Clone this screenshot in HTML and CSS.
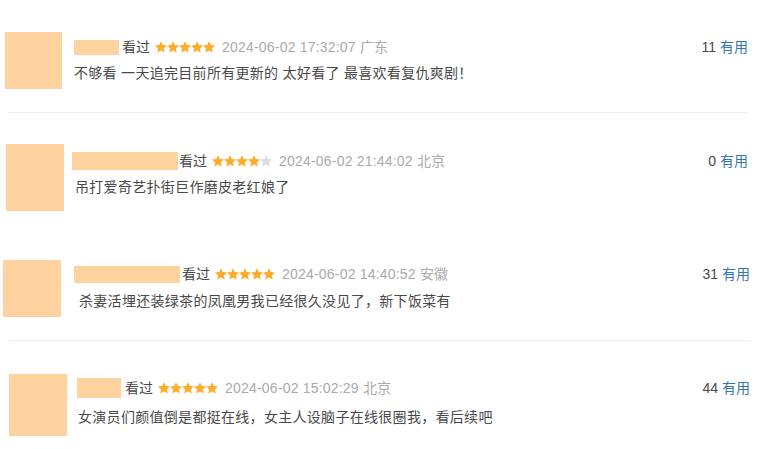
FILE: index.html
```html
<!DOCTYPE html>
<html>
<head>
    <title>短评</title>
    <link rel="stylesheet" href="styles.css">
</head>
<body>
    <svg class="defs" width="0" height="0">
        <symbol id="star" viewBox="1 1.2 22 21">
            <path d="M12 1.2l3.3 7 7.7.9-5.7 5.2 1.6 7.6L12 18l-6.9 3.9 1.6-7.6L1 9.1l7.7-.9z"/>
        </symbol>
    </svg>

    <div class="list">
        <!-- 第一条 -->
        <div class="item item-1">
            <div class="avatar"></div>
            <div class="main">
                <div class="head">
                    <span class="name"></span>
                    <span class="watched">看过</span>
                    <span class="stars">
                        <svg class="star on"><use href="#star"/></svg><svg class="star on"><use href="#star"/></svg><svg class="star on"><use href="#star"/></svg><svg class="star on"><use href="#star"/></svg><svg class="star on"><use href="#star"/></svg>
                    </span>
                    <span class="time">2024-06-02 17:32:07 广东</span>
                    <span class="vote">11 <a href="#">有用</a></span>
                </div>
                <p class="text">不够看 一天追完目前所有更新的 太好看了 最喜欢看复仇爽剧！</p>
            </div>
        </div>
        <div class="divider divider-1"></div>

        <!-- 第二条 -->
        <div class="item item-2">
            <div class="avatar"></div>
            <div class="main">
                <div class="head">
                    <span class="name"></span>
                    <span class="watched">看过</span>
                    <span class="stars">
                        <svg class="star on"><use href="#star"/></svg><svg class="star on"><use href="#star"/></svg><svg class="star on"><use href="#star"/></svg><svg class="star on"><use href="#star"/></svg><svg class="star"><use href="#star"/></svg>
                    </span>
                    <span class="time">2024-06-02 21:44:02 北京</span>
                    <span class="vote">0 <a href="#">有用</a></span>
                </div>
                <p class="text">吊打爱奇艺扑街巨作磨皮老红娘了</p>
            </div>
        </div>

        <!-- 第三条 -->
        <div class="item item-3">
            <div class="avatar"></div>
            <div class="main">
                <div class="head">
                    <span class="name"></span>
                    <span class="watched">看过</span>
                    <span class="stars">
                        <svg class="star on"><use href="#star"/></svg><svg class="star on"><use href="#star"/></svg><svg class="star on"><use href="#star"/></svg><svg class="star on"><use href="#star"/></svg><svg class="star on"><use href="#star"/></svg>
                    </span>
                    <span class="time">2024-06-02 14:40:52 安徽</span>
                    <span class="vote">31 <a href="#">有用</a></span>
                </div>
                <p class="text">杀妻活埋还装绿茶的凤凰男我已经很久没见了，新下饭菜有</p>
            </div>
        </div>
        <div class="divider divider-2"></div>

        <!-- 第四条 -->
        <div class="item item-4">
            <div class="avatar"></div>
            <div class="main">
                <div class="head">
                    <span class="name"></span>
                    <span class="watched">看过</span>
                    <span class="stars">
                        <svg class="star on"><use href="#star"/></svg><svg class="star on"><use href="#star"/></svg><svg class="star on"><use href="#star"/></svg><svg class="star on"><use href="#star"/></svg><svg class="star on"><use href="#star"/></svg>
                    </span>
                    <span class="time">2024-06-02 15:02:29 北京</span>
                    <span class="vote">44 <a href="#">有用</a></span>
                </div>
                <p class="text">女演员们颜值倒是都挺在线，女主人设脑子在线很圈我，看后续吧</p>
            </div>
        </div>
    </div>
</body>
</html>
```

FILE: styles.css
```css
/* 短评列表 */
body {
    margin: 0;
    padding: 0;
    background-color: #FFFFFF;
    font-family: "Liberation Sans", "Noto Sans CJK SC", sans-serif;
    font-size: 14px;
    color: #494949;
}

.defs {
    position: absolute;
}

.list {
    width: 758px;
}

.item {
    display: flex;
    align-items: flex-start;
    box-sizing: border-box;
}

.avatar {
    flex: none;
    width: 58px;
    height: 57px;
    background-color: #FFD39F;
}

.main {
    flex: 1;
    padding-right: 10px;
}

.head {
    display: flex;
    align-items: center;
    height: 20px;
    line-height: 20px;
    white-space: nowrap;
}

.name {
    width: 45px;
    height: 15px;
    background-color: #FFD39F;
    margin-right: 3px;
}

.watched {
    color: #494949;
}

.stars {
    display: flex;
    margin-left: 5px;
    margin-right: 7px;
}

.star {
    width: 12px;
    height: 12px;
    fill: #DDDDDD;
}

.star.on {
    fill: #FFAC2D;
}

.time {
    color: #AAAAAA;
    letter-spacing: 0.2px;
}

.vote {
    margin-left: auto;
    color: #494949;
}

.vote a {
    color: #3377AA;
    text-decoration: none;
}

.text {
    margin: 6px 0 0 0;
    line-height: 20px;
    letter-spacing: 0.3px;
    color: #494949;
}

.divider {
    height: 1px;
    background-color: #EEEEEE;
}

/* 各条目的偏移 */
.item-1 {
    height: 112px;
}

.item-1 .avatar {
    margin: 32px 0 0 5px;
    width: 57px;
}

.item-1 .main {
    margin-left: 12px;
    padding-top: 37px;
}

.divider-1 {
    margin-left: 7px;
    width: 741px;
}

.item-2 {
    height: 127px;
}

.item-2 .avatar {
    margin: 31px 0 0 6px;
    height: 67px;
}

.item-2 .main {
    margin-left: 8px;
    padding-top: 38px;
}

.item-2 .name {
    width: 106px;
    height: 18px;
    margin-right: 1px;
}

.item-2 .text {
    margin-left: 3px;
}

.item-3 {
    height: 100px;
}

.item-3 .avatar {
    margin: 20px 0 0 3px;
}

.item-3 .main {
    margin-left: 13px;
    padding-top: 24px;
    padding-right: 8px;
}

.item-3 .name {
    width: 106px;
    height: 17px;
    margin-right: 2px;
}

.item-3 .text {
    margin: 7px 0 0 5px;
}

.divider-2 {
    margin-left: 9px;
    width: 742px;
}

.item-4 {
    height: 108px;
}

.item-4 .avatar {
    margin: 33px 0 0 9px;
    height: 62px;
}

.item-4 .main {
    margin-left: 10px;
    padding-top: 37px;
    padding-right: 8px;
}

.item-4 .name {
    width: 44px;
    height: 20px;
    margin-right: 4px;
}

.item-4 .text {
    margin: 9px 0 0 1px;
}
```
